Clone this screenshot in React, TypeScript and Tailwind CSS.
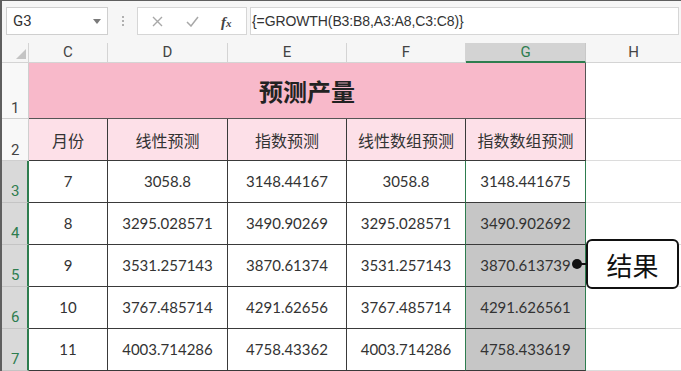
import React from 'react';

const rows = [
  ['7', '3058.8', '3148.44167', '3058.8', '3148.441675'],
  ['8', '3295.028571', '3490.90269', '3295.028571', '3490.902692'],
  ['9', '3531.257143', '3870.61374', '3531.257143', '3870.613739'],
  ['10', '3767.485714', '4291.62656', '3767.485714', '4291.626561'],
  ['11', '4003.714286', '4758.43362', '4003.714286', '4758.433619'],
];

const heads = ['月份', '线性预测', '指数预测', '线性数组预测', '指数数组预测'];
const cols = ['C', 'D', 'E', 'F', 'G'];

const uiFont = { fontFamily: 'Roboto, "Open Sans", "Liberation Sans", sans-serif' };
const cjk = { fontFamily: '"Noto Sans CJK SC", "Noto Sans", sans-serif' };
const num = { fontFamily: 'Lato, "Noto Sans CJK SC", sans-serif' };

export default function App() {
  return (
    <div className="relative w-[681px] h-[371px] overflow-hidden bg-white border-l-2 border-t border-[#5f5f5f]">
      {/* formula bar */}
      <div className="flex h-[42px] bg-[#f6f6f6] pt-[6px]" style={uiFont}>
        <div className="ml-[4px] w-[102px] h-[28px] bg-white border border-[#cfcfcf] flex items-center justify-between pl-[6px] pr-[6px]">
          <span className="text-[15px] text-[#333]">G3</span>
          <svg width="8" height="5" viewBox="0 0 8 5"><path d="M0 0 H8 L4 5 Z" fill="#7a7a7a" /></svg>
        </div>
        <div className="w-[29px] h-[28px] flex flex-col items-center justify-center gap-[2px]">
          <div className="w-[2px] h-[2px] bg-[#b0b0b0]" />
          <div className="w-[2px] h-[2px] bg-[#b0b0b0]" />
          <div className="w-[2px] h-[2px] bg-[#b0b0b0]" />
        </div>
        <div className="relative w-[110px] h-[28px] bg-white border border-[#d6d6d6]">
          <svg className="absolute left-[14px] top-[8px]" width="11" height="11" viewBox="0 0 11 11">
            <path d="M1 1 L10 10 M10 1 L1 10" stroke="#a8a8a8" strokeWidth="1.4" />
          </svg>
          <svg className="absolute left-[48px] top-[8px]" width="13" height="11" viewBox="0 0 13 11">
            <path d="M1 6 L5 10 L12 1" stroke="#a8a8a8" strokeWidth="1.5" fill="none" />
          </svg>
          <span className="absolute left-[83px] top-[3px] text-[15px] italic font-bold text-[#444]" style={{ fontFamily: '"Liberation Serif", serif' }}>
            f<span className="text-[11px]">x</span>
          </span>
        </div>
        <div className="ml-[3px] w-[429px] h-[28px] bg-white border border-[#d6d6d6] flex items-center pl-[1px]">
          <span className="text-[14px] text-[#333] tracking-[-0.1px]" style={{ fontFamily: '"Liberation Sans", sans-serif' }}>
            {'{=GROWTH(B3:B8,A3:A8,C3:C8)}'}
          </span>
        </div>
      </div>

      {/* sheet grid */}
      <div className="grid grid-cols-[27px_79px_120px_119px_119px_120px_1fr] grid-rows-[20px_56px_42px_42px_42px_42px_42px_42px]">
        {/* column headers */}
        <div className="relative bg-[#f6f6f6] border-r border-b border-[#d4d4d4]">
          <svg className="absolute left-[14px] top-[6px]" width="10" height="10" viewBox="0 0 10 10"><path d="M10 0 V10 H0 Z" fill="#c4c4c4" /></svg>
        </div>
        {cols.map((c) =>
          c === 'G' ? (
            <div key={c} className="bg-[#d3d3d3] border-r border-[#c8c8c8] border-b-2 border-b-[#2e7d4f] flex items-center justify-center text-[15px] text-[#2e7d4f] leading-none" style={uiFont}>
              {c}
            </div>
          ) : (
            <div key={c} className="bg-[#f6f6f6] border-r border-b border-[#d4d4d4] flex items-center justify-center text-[15px] text-[#444] leading-none" style={uiFont}>
              {c}
            </div>
          )
        )}
        <div className="bg-[#f6f6f6] border-b border-[#d4d4d4] flex items-center justify-center text-[15px] text-[#444] leading-none" style={uiFont}>
          H
        </div>

        {/* row 1 */}
        <div className="bg-[#f8f8f8] border-r border-b border-[#cfcfcf] flex items-end pl-[9px] pb-[2px] text-[15px] text-[#444] leading-none" style={uiFont}>1</div>
        <div className="col-span-5 bg-[#f8b9ca] border-r border-b border-[#555] flex items-center justify-center text-[24px] font-bold text-[#222]" style={cjk}>
          预测产量
        </div>
        <div className="border-b border-[#dcdcdc]" />

        {/* row 2 */}
        <div className="bg-[#f8f8f8] border-r border-b border-[#cfcfcf] flex items-end pl-[9px] pb-[2px] text-[15px] text-[#444] leading-none" style={uiFont}>2</div>
        {heads.map((h) => (
          <div key={h} className="bg-[#fde0e8] border-r border-b border-[#3a3a3a] flex items-center justify-center text-[16px] text-[#333]" style={cjk}>
            {h}
          </div>
        ))}
        <div className="border-b border-[#dcdcdc]" />

        {/* data rows */}
        {rows.map((r, i) => (
          <React.Fragment key={i}>
            <div className="bg-[#d9d9d9] border-r-2 border-r-[#2e7d4f] border-b border-b-[#c4c4c4] flex items-end pl-[9px] pb-[3px] text-[15px] text-[#2e7d4f] leading-none" style={uiFont}>
              {i + 3}
            </div>
            {r.map((v, j) =>
              j === 4 ? (
                <div
                  key={j}
                  className={`${i === 0 ? 'bg-white' : 'bg-[#c6c6c6]'} border-r border-r-[#2e7d4f] border-b border-b-[#3a3a3a] flex items-center justify-center text-[15px] text-[#333]`}
                  style={num}
                >
                  {v}
                </div>
              ) : j === 3 ? (
                <div key={j} className="border-r border-r-[#2e7d4f] border-b border-b-[#3a3a3a] flex items-center justify-center text-[15px] text-[#333]" style={num}>
                  {v}
                </div>
              ) : (
                <div key={j} className="border-r border-b border-[#3a3a3a] flex items-center justify-center text-[15px] text-[#333]" style={num}>
                  {v}
                </div>
              )
            )}
            <div className="border-b border-[#dcdcdc]" />
          </React.Fragment>
        ))}
      </div>

      {/* callout */}
      <div className="absolute left-[570px] top-[258px] w-[10px] h-[10px] rounded-full bg-[#111]" />
      <div className="absolute left-[575px] top-[262px] w-[11px] h-[2px] bg-[#111]" />
      <div
        className="absolute left-[584px] top-[238px] w-[93px] h-[50px] bg-white border-2 border-[#111] rounded-[6px] flex items-center justify-center text-[26px] text-[#111]"
        style={cjk}
      >
        结果
      </div>
    </div>
  );
}
